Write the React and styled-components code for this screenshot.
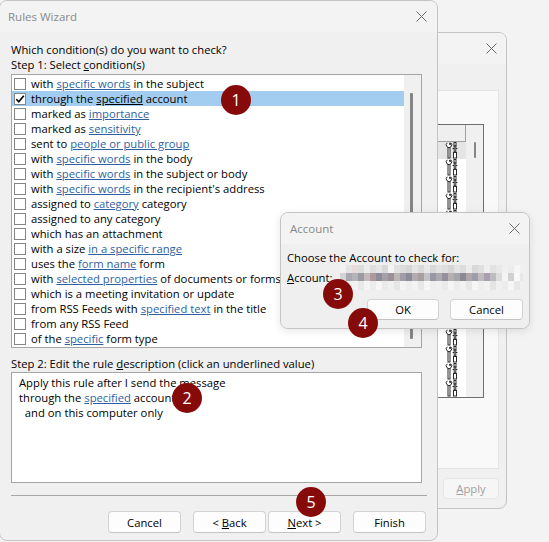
import React from 'react';
import styled, { createGlobalStyle } from 'styled-components';

const GlobalStyle = createGlobalStyle`
  html, body { margin: 0; padding: 0; background: #f3f3f3; overflow: hidden; }
  body {
    font-family: "Open Sans", "Noto Sans", sans-serif;
    font-size: 11.25px;
    color: #000;
  }
`;

const Desktop = styled.div`
  position: relative;
  width: 549px;
  height: 542px;
  overflow: hidden;
  background: #f3f3f3;
`;

// windows sit on the desktop at fixed places
const Window = styled.div`
  position: absolute;
  left: ${p => p.$left}px;
  top: ${p => p.$top}px;
  width: ${p => p.$width}px;
  height: ${p => p.$height}px;
  box-sizing: border-box;
  border: 1px solid #c4c4c4;
  border-radius: 8px;
  background: #f0f0f0;
  display: flex;
  flex-direction: column;
  overflow: hidden;
  box-shadow: ${p => (p.$shadow ? '0 2px 8px rgba(0,0,0,0.10)' : 'none')};
`;

const TitleBar = styled.div`
  flex: none;
  height: 31px;
  display: flex;
  align-items: center;
  justify-content: space-between;
  padding: 0 ${p => p.$padR}px 0 ${p => p.$padL}px;
  background: #f3f3f3;
  color: #8a8a8a;
  font-size: 11.5px;
`;

const CloseIcon = () => (
  <svg width="11" height="11" viewBox="0 0 11 11">
    <path d="M0.5 0.5 L10.5 10.5 M10.5 0.5 L0.5 10.5" stroke="#6a6a6a" strokeWidth="1" />
  </svg>
);

/* ---------- background (Rule options) window ---------- */

const BackBody = styled.div`
  flex: 1;
  display: flex;
  flex-direction: column;
  padding: 26px 7px 9px 20px;
`;

const BackPanel = styled.div`
  flex: 1;
  background: #f9f9f9;
  border: 1px solid #e4e4e4;
  padding: 33px 14px 0 4px;
`;

const BackList = styled.div`
  height: 274px;
  box-sizing: border-box;
  border: 1px solid #6e6e6e;
  background: #fff;
  display: flex;
`;

const BackColumn = styled.div`
  flex: 1;
  display: flex;
  flex-direction: column;
`;

const BackHeader = styled.div`
  height: 18px;
  box-sizing: border-box;
  background: #efefef;
  border-bottom: 1px solid #a0a0a0;
  border-right: 1px solid #a0a0a0;
`;

const IconRow = styled.div`
  height: 17px;
  display: flex;
  justify-content: flex-end;
  align-items: center;
  padding-right: 8px;
  background: ${p => (p.$active ? '#e5e5e5' : 'transparent')};
`;

const Scrollbar = styled.div`
  width: 17px;
  flex: none;
  background: #f0f0f0;
`;

const Thumb = styled.div`
  width: ${p => p.$w}px;
  height: ${p => p.$h}px;
  margin: ${p => p.$top}px 0 0 ${p => p.$left}px;
  background: #858585;
  border-radius: 1px;
`;

const ApplyButton = styled.div`
  align-self: flex-end;
  margin-top: 9px;
  width: 56px;
  height: 21px;
  box-sizing: border-box;
  border: 1px solid #e6e6e6;
  border-radius: 4px;
  background: #f6f6f6;
  color: #a0a0a0;
  display: flex;
  align-items: center;
  justify-content: center;
`;

// wrench + plug, the rule action glyph of the list behind
const RuleIcon = () => (
  <svg width="13" height="17" viewBox="0 0 13 17" fill="#fff" stroke="#2a2a2a" strokeWidth="1">
    <path d="M2.3 0.8 A2.7 2.7 0 1 0 5.7 0.8 V2.6 H4.6 V0.8" />
    <rect x="3" y="5.6" width="2" height="10.4" />
    <rect x="9" y="0.5" width="2" height="3.5" />
    <path d="M7.6 6.5 H12.4" />
    <rect x="9.2" y="4" width="1.6" height="6" />
    <rect x="8.5" y="10.5" width="3" height="5.5" />
  </svg>
);

/* ---------- Rules Wizard ---------- */

const WizardBody = styled.div`
  flex: 1;
  display: flex;
  flex-direction: column;
  padding: 10px 15px 0 11px;
`;

const Line = styled.div`
  line-height: 15px;
  height: 15px;
  white-space: pre;
  margin-top: ${p => p.$mt || 0}px;
`;

const ListBox = styled.div`
  margin-top: 2px;
  height: 274px;
  box-sizing: border-box;
  border: 1px solid #a5a5a5;
  background: #fff;
  display: flex;
`;

const Rows = styled.div`
  flex: 1;
  padding-top: 1px;
`;

const Row = styled.div`
  height: 15px;
  display: flex;
  align-items: center;
  padding-left: 2px;
  white-space: pre;
  background: ${p => (p.$selected ? '#a3cdf0' : 'transparent')};
  a { color: ${p => (p.$selected ? '#000' : '#2f5fa3')}; }
`;

const Box = styled.span`
  width: 12px;
  height: 12px;
  box-sizing: border-box;
  border: 1px solid #858585;
  background: #fff;
  margin-right: 5px;
  flex: none;
  display: flex;
  align-items: center;
  justify-content: center;
`;

const Link = styled.a`
  text-decoration: underline;
  text-underline-offset: 1px;
`;

const DescBox = styled.div`
  margin-top: 1px;
  height: 111px;
  box-sizing: border-box;
  border: 1px solid #a5a5a5;
  background: #fff;
  padding: 2px 7px;
  a { color: #2f5fa3; }
`;

const Separator = styled.div`
  margin: 12px -5px 0 0;
  height: 1px;
  background: #a8a8a8;
`;

const ButtonRow = styled.div`
  display: flex;
  justify-content: flex-end;
  margin: ${p => p.$mt}px ${p => p.$mr || 0}px 0 0;
`;

const Button = styled.div`
  width: ${p => p.$w || 73}px;
  height: ${p => p.$h || 22}px;
  margin-left: ${p => p.$gap || 0}px;
  box-sizing: border-box;
  border: 1px solid #d3d3d3;
  border-bottom-color: #c3c3c3;
  border-radius: 4px;
  background: #fdfdfd;
  display: flex;
  align-items: center;
  justify-content: center;
  white-space: pre;
`;

/* ---------- Account dialog ---------- */

const DialogBody = styled.div`
  flex: 1;
  display: flex;
  flex-direction: column;
  padding: 6px 6px 0 6px;
  background: #efefef;
`;

const FieldRow = styled.div`
  height: 25px;
  display: flex;
  align-items: center;
  justify-content: space-between;
`;

const Mosaic = styled.div`
  width: 183px;
  height: 25px;
  display: flex;
  overflow: hidden;
`;

const MosaicCol = styled.div`
  width: 6px;
  flex: none;
  display: flex;
  flex-direction: column;
`;

const Cell = styled.div`
  height: ${p => p.$h}px;
  background: ${p => p.$c};
`;

/* ---------- callout badges ---------- */

const Badge = styled.div`
  position: absolute;
  left: ${p => p.$x - 15}px;
  top: ${p => p.$y - 15}px;
  width: 30px;
  height: 30px;
  border-radius: 50%;
  background: #860a0a;
  color: #fff;
  font-size: 16px;
  line-height: 30px;
  text-align: center;
  z-index: 10;
`;

const conditions = [
  'with [specific words] in the subject',
  'through the [specified] account',
  'marked as [importance]',
  'marked as [sensitivity]',
  'sent to [people or public group]',
  'with [specific words] in the body',
  'with [specific words] in the subject or body',
  "with [specific words] in the recipient's address",
  'assigned to [category] category',
  'assigned to any category',
  'which has an attachment',
  'with a size [in a specific range]',
  'uses the [form name] form',
  'with [selected properties] of documents or forms',
  'which is a meeting invitation or update',
  'from RSS Feeds with [specified text] in the title',
  'from any RSS Feed',
  'of the [specific] form type',
];

const renderText = text =>
  text.split(/(\[[^\]]+\])/).map((part, i) =>
    part.startsWith('[') ? <Link key={i}>{part.slice(1, -1)}</Link> : part
  );

const topRow = ['#f2f2f2','#e4e4e4','#e6dada','#dcdcdc','#ececec','#dedede','#e6e6e6','#d8d8d8','#f4f4f4','#e2e2e2','#dcdcdc','#d6d6d6','#e4e4e4','#dadada','#e8e8e8','#d8d8d8','#e2e2e2','#dedede','#d6d6d6','#e4e4e4','#dcdcdc','#ececec','#d8d8d8','#e0e0e0','#eeeeee','#e2e2e2','#e8e8e8','#f0f0f0','#ececec','#f6f6f6','#f0f0f0'];
const midRow = ['#d4d4d8','#a8a8b0','#b4b4b8','#9a9aa4','#c4b8b8','#ad9a9e','#8e8c98','#a4a0a8','#9c9098','#bcb6b6','#a09cac','#8c8c98','#b0acb0','#a89ea0','#c4c4c8','#9898a4','#aca8b0','#94909c','#b8b0b0','#a4a4ac','#8c8894','#b0a8a8','#9c9cac','#c0bcbc','#a8a0b0','#bcbcc0','#dcdcdc','#f4f4f4','#d0d0d0','#f8f8f8','#e8e8e8'];
const lowRow = ['#f6f6f6','#eeeeee','#f2f2f2','#e8e8e8','#f4f4f4','#ececec','#f6f6f6','#eaeaea','#f0f0f0','#e6e6e6','#f4f4f4','#eeeeee','#f2f2f2','#e8e8e8','#f6f6f6','#eeeeee','#f0f0f0','#eaeaea','#f4f4f4','#ececec','#f2f2f2','#e8e8e8','#f6f6f6','#eeeeee','#f2f2f2','#e4e4e4','#f0f0f0','#ececec','#f6f6f6','#e8e8e8','#f0f0f0'];

export default function App() {
  return (
    <Desktop>
      <GlobalStyle />

      <Window $left={300} $top={32} $width={207} $height={477}>
        <TitleBar $padL={9} $padR={9}>
          <span />
          <CloseIcon />
        </TitleBar>
        <BackBody>
          <BackPanel>
            <BackList>
              <BackColumn>
                <BackHeader />
                {Array.from({ length: 15 }).map((_, i) => (
                  <IconRow key={i} $active={i === 0}>
                    <RuleIcon />
                  </IconRow>
                ))}
              </BackColumn>
              <Scrollbar>
                <Thumb $w={2} $h={16} $top={17} $left={8} />
              </Scrollbar>
            </BackList>
          </BackPanel>
          <ApplyButton>
            <span><u>A</u>pply</span>
          </ApplyButton>
        </BackBody>
      </Window>

      <Window $left={-1} $top={0} $width={439} $height={541}>
        <TitleBar $padL={8} $padR={10}>
          <span>Rules Wizard</span>
          <CloseIcon />
        </TitleBar>
        <WizardBody>
          <Line>Which condition(s) do you want to check?</Line>
          <Line>Step 1: Select <u>c</u>ondition(s)</Line>
          <ListBox>
            <Rows>
              {conditions.map((c, i) => (
                <Row key={i} $selected={i === 1}>
                  <Box>
                    {i === 1 && (
                      <svg width="10" height="10" viewBox="0 0 10 10">
                        <path d="M1.3 5.2 L3.8 7.8 L8.8 1.8" fill="none" stroke="#000" strokeWidth="1.6" />
                      </svg>
                    )}
                  </Box>
                  <span>{renderText(c)}</span>
                </Row>
              ))}
            </Rows>
            <Scrollbar>
              <Thumb $w={3} $h={246} $top={18} $left={6} />
            </Scrollbar>
          </ListBox>
          <Line $mt={8}>Step 2: Edit the rule <u>d</u>escription (click an underlined value)</Line>
          <DescBox>
            <Line>Apply this rule after I send the message</Line>
            <Line>through the <Link>specified</Link> account</Line>
            <Line>  and on this computer only</Line>
          </DescBox>
          <Separator />
          <ButtonRow $mt={15} $mr={-4}>
            <Button>Cancel</Button>
            <Button $gap={12}>{'< '}<u>B</u>ack</Button>
            <Button $gap={2}><u>N</u>ext{' >'}</Button>
            <Button $gap={12}>Finish</Button>
          </ButtonRow>
        </WizardBody>
      </Window>

      <Window $left={280} $top={212} $width={250} $height={117} $shadow>
        <TitleBar $padL={9} $padR={9}>
          <span>Account</span>
          <CloseIcon />
        </TitleBar>
        <DialogBody>
          <Line>Choose the Account to check for:</Line>
          <FieldRow>
            <span><u>A</u>ccount:</span>
            <Mosaic>
              {topRow.map((c, i) => (
                <MosaicCol key={i}>
                  <Cell $h={8} $c={c} />
                  <Cell $h={8} $c={midRow[i]} />
                  <Cell $h={9} $c={lowRow[i]} />
                </MosaicCol>
              ))}
            </Mosaic>
          </FieldRow>
          <ButtonRow $mt={9}>
            <Button $w={72} $h={21}>OK</Button>
            <Button $w={73} $h={21} $gap={11}>Cancel</Button>
          </ButtonRow>
        </DialogBody>
      </Window>

      <Badge $x={236} $y={100}>1</Badge>
      <Badge $x={187} $y={398}>2</Badge>
      <Badge $x={338} $y={294}>3</Badge>
      <Badge $x={363} $y={323}>4</Badge>
      <Badge $x={311} $y={502}>5</Badge>
    </Desktop>
  );
}
